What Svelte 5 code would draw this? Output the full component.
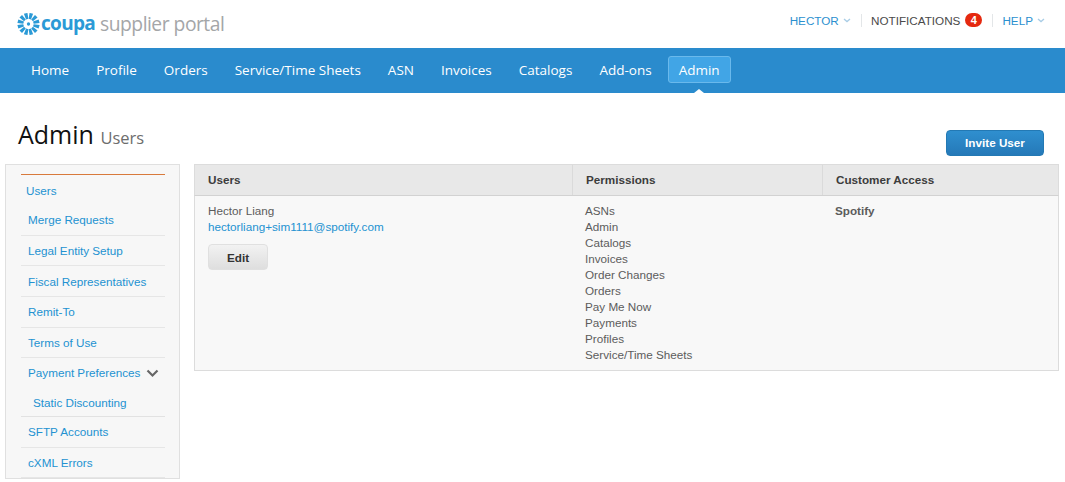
<script>
    const navItems = ["Home", "Profile", "Orders", "Service/Time Sheets", "ASN", "Invoices", "Catalogs", "Add-ons", "Admin"];
    const permissions = ["ASNs", "Admin", "Catalogs", "Invoices", "Order Changes", "Orders", "Pay Me Now", "Payments", "Profiles", "Service/Time Sheets"];
    const topItems = [
        { label: "Merge Requests", h: 31, lh: 30 },
        { label: "Legal Entity Setup", h: 30, lh: 29 },
        { label: "Fiscal Representatives", h: 31, lh: 31 },
        { label: "Remit-To", h: 31, lh: 29 },
        { label: "Terms of Use", h: 30, lh: 29 }
    ];
    const bottomItems = [
        { label: "SFTP Accounts", h: 31, lh: 29 },
        { label: "cXML Errors", h: 30, lh: 29 }
    ];
    const spokes = Array.from({ length: 12 }, (_, i) => i * 30);
</script>

<div class="page">
    <header class="top">
        <div class="logo">
            <svg width="23" height="22" viewBox="-12 -12 24 24" class="burst">
                {#each spokes as a}
                    <path d="M-2 -12 L2 -12 L1.3 -5.5 L-1.3 -5.5 Z" fill="#2b9ad6" transform="rotate({a + 15})" />
                {/each}
                <circle r="1.8" fill="#2b9ad6" />
            </svg>
            <span class="coupa">coupa</span>
            <span class="portal">supplier portal</span>
        </div>
        <div class="usermenu">
            <span class="link">HECTOR <svg class="caret" width="8" height="5" viewBox="0 0 8 5"><path d="M1 1l3 2.6L7 1" /></svg></span>
            <span class="sep"></span>
            <span class="notif">NOTIFICATIONS</span>
            <span class="badge">4</span>
            <span class="sep"></span>
            <span class="link">HELP <svg class="caret" width="8" height="5" viewBox="0 0 8 5"><path d="M1 1l3 2.6L7 1" /></svg></span>
        </div>
    </header>

    <nav class="nav">
        {#each navItems as item}
            <span class="nav-item" class:active={item === "Admin"}>{item}</span>
        {/each}
    </nav>

    <div class="title-row">
        <h1>Admin <small>Users</small></h1>
        <button class="invite">Invite User</button>
    </div>

    <div class="content">
        <aside class="side">
            <div class="side-first">Users</div>
            {#each topItems as item}
                <div class="side-item" style="height: {item.h}px; line-height: {item.lh}px">{item.label}</div>
            {/each}
            <div class="side-pay">
                <span>Payment Preferences</span>
                <svg width="13" height="9" viewBox="0 0 13 9"><path d="M1.5 1.5l5 5 5-5" /></svg>
            </div>
            <div class="side-sub">Static Discounting</div>
            {#each bottomItems as item}
                <div class="side-item" style="height: {item.h}px; line-height: {item.lh}px">{item.label}</div>
            {/each}
        </aside>

        <section class="table">
            <div class="thead">
                <div class="c1">Users</div>
                <div class="c2">Permissions</div>
                <div class="c3">Customer Access</div>
            </div>
            <div class="tbody">
                <div class="c1 user">
                    <div>Hector Liang</div>
                    <div class="email">hectorliang+sim1111@spotify.com</div>
                    <button class="edit">Edit</button>
                </div>
                <div class="c2 perms">
                    {#each permissions as p}
                        <div>{p}</div>
                    {/each}
                </div>
                <div class="c3 cust">Spotify</div>
            </div>
        </section>
    </div>
</div>

<style>
    :global(body) {
        margin: 0;
        background: #fff;
    }

    .page {
        width: 1065px;
        height: 482px;
        overflow: hidden;
        font-family: "Liberation Sans", Arial, sans-serif;
        font-size: 11.7px;
        color: #5c5c5c;
    }

    .top {
        height: 48px;
        display: flex;
        justify-content: space-between;
        align-items: center;
        box-sizing: border-box;
        padding: 0 20px 0 17px;
    }

    .logo {
        display: flex;
        align-items: center;
        height: 48px;
    }

    .coupa {
        font-family: "Open Sans", sans-serif;
        font-weight: 700;
        font-size: 19px;
        letter-spacing: -0.7px;
        color: #2b9ad6;
        margin: -2px 0 0 1px;
    }

    .portal {
        font-family: "Open Sans", sans-serif;
        font-size: 19.3px;
        letter-spacing: -0.5px;
        color: #a4a6a8;
        margin: -2px 0 0 5px;
    }

    .usermenu {
        display: flex;
        align-items: center;
        font-size: 11.7px;
        margin-top: -7px;
    }

    .link {
        color: #2b90cf;
    }

    .caret {
        vertical-align: 2px;
        margin-left: 1px;
    }

    .caret path {
        fill: none;
        stroke: #a9cde6;
        stroke-width: 1.3;
    }

    .sep {
        width: 1px;
        height: 13px;
        background: #e3e6e8;
        margin: 0 9px 0 10px;
    }

    .notif {
        color: #4a4a4a;
    }

    .badge {
        width: 17px;
        height: 14px;
        margin-left: 5px;
        margin-top: -2px;
        border-radius: 7px;
        background: #e5290f;
        color: #fff;
        font-size: 11px;
        font-weight: 700;
        line-height: 14px;
        text-align: center;
    }

    .nav {
        height: 45px;
        background: #2a8bcd;
        display: flex;
        align-items: center;
        box-sizing: border-box;
        padding: 0 0 3px 21px;
        gap: 7px;
        font-family: "Open Sans", sans-serif;
        font-size: 13.5px;
        color: #fff;
    }

    .nav-item {
        padding: 0 10px;
        height: 27px;
        line-height: 28px;
        box-sizing: border-box;
        position: relative;
    }

    .nav-item.active {
        background: #41a5e6;
        border: 1px solid #6ab9ec;
        border-radius: 3px;
        line-height: 26px;
        margin-left: -1px;
    }

    .nav-item.active::after {
        content: "";
        position: absolute;
        left: 50%;
        bottom: -11px;
        margin-left: -5px;
        border-left: 5px solid transparent;
        border-right: 5px solid transparent;
        border-bottom: 4px solid #fff;
    }

    .title-row {
        height: 71px;
        display: flex;
        justify-content: space-between;
        box-sizing: border-box;
        padding: 0 21px 0 18px;
    }

    h1 {
        margin: 24px 0 0;
        font-family: "Open Sans", sans-serif;
        font-weight: 400;
        font-size: 25px;
        line-height: 34px;
        color: #111;
    }

    h1 small {
        font-size: 16.5px;
        color: #6d6d6d;
    }

    .invite {
        margin-top: 37px;
        width: 98px;
        height: 26px;
        border: 1px solid #2379b4;
        border-radius: 4px;
        background: linear-gradient(#2f8fcf, #2579b8);
        color: #fff;
        font-family: "Liberation Sans", Arial, sans-serif;
        font-size: 11.7px;
        font-weight: 700;
        padding: 0 0 2px;
    }

    .content {
        display: flex;
        align-items: flex-start;
        padding-left: 5px;
        gap: 14px;
    }

    .side {
        width: 175px;
        height: 315px;
        flex: none;
        box-sizing: border-box;
        background: #f7f7f7;
        border: 1px solid #e0e0e0;
        padding: 9px 14px 0 15px;
        overflow: hidden;
    }

    .side div {
        color: #2392d1;
    }

    .side-first {
        border-top: 1px solid #d87a3c;
        height: 30px;
        line-height: 32px;
        padding-left: 5px;
    }

    .side-item {
        padding-left: 7px;
        box-sizing: border-box;
        border-bottom: 1px solid #e6e6e6;
    }

    .side-pay {
        height: 30px;
        line-height: 32px;
        padding-left: 7px;
        display: flex;
        align-items: center;
        justify-content: space-between;
        padding-right: 6px;
    }

    .side-pay svg {
        fill: none;
        stroke: #666;
        stroke-width: 2.2;
    }

    .side-sub {
        height: 29px;
        line-height: 29px;
        padding-left: 12px;
        box-sizing: border-box;
        border-bottom: 1px solid #e2e2e2;
    }

    .table {
        width: 865px;
        flex: none;
    }

    .thead {
        height: 32px;
        box-sizing: border-box;
        display: flex;
        background: #e8e8e8;
        border: 1px solid #dcdcdc;
        border-bottom: 1px solid #d2d2d2;
        font-weight: 700;
        color: #3c3c3c;
        line-height: 30px;
    }

    .thead .c1 {
        width: 378px;
        box-sizing: border-box;
        padding-left: 13px;
        border-right: 1px solid #dadada;
    }

    .thead .c2 {
        width: 250px;
        box-sizing: border-box;
        padding-left: 13px;
        border-right: 1px solid #dadada;
    }

    .thead .c3 {
        padding-left: 13px;
    }

    .tbody {
        height: 175px;
        box-sizing: border-box;
        display: flex;
        background: #f8f8f8;
        border: 1px solid #dcdcdc;
        border-top: none;
        line-height: 16px;
        padding-top: 7px;
    }

    .user {
        width: 378px;
        box-sizing: border-box;
        padding-left: 13px;
    }

    .email {
        color: #2392d1;
    }

    .edit {
        display: block;
        margin-top: 9px;
        width: 60px;
        height: 26px;
        border: 1px solid #e0e0e0;
        border-radius: 4px;
        background: linear-gradient(#f2f2f2, #dedede);
        color: #333;
        font-family: "Liberation Sans", Arial, sans-serif;
        font-size: 11.7px;
        font-weight: 700;
        padding: 0;
    }

    .perms {
        width: 250px;
        box-sizing: border-box;
        padding-left: 12px;
    }

    .cust {
        padding-left: 12px;
        font-weight: 700;
        color: #5c5c5c;
    }
</style>
